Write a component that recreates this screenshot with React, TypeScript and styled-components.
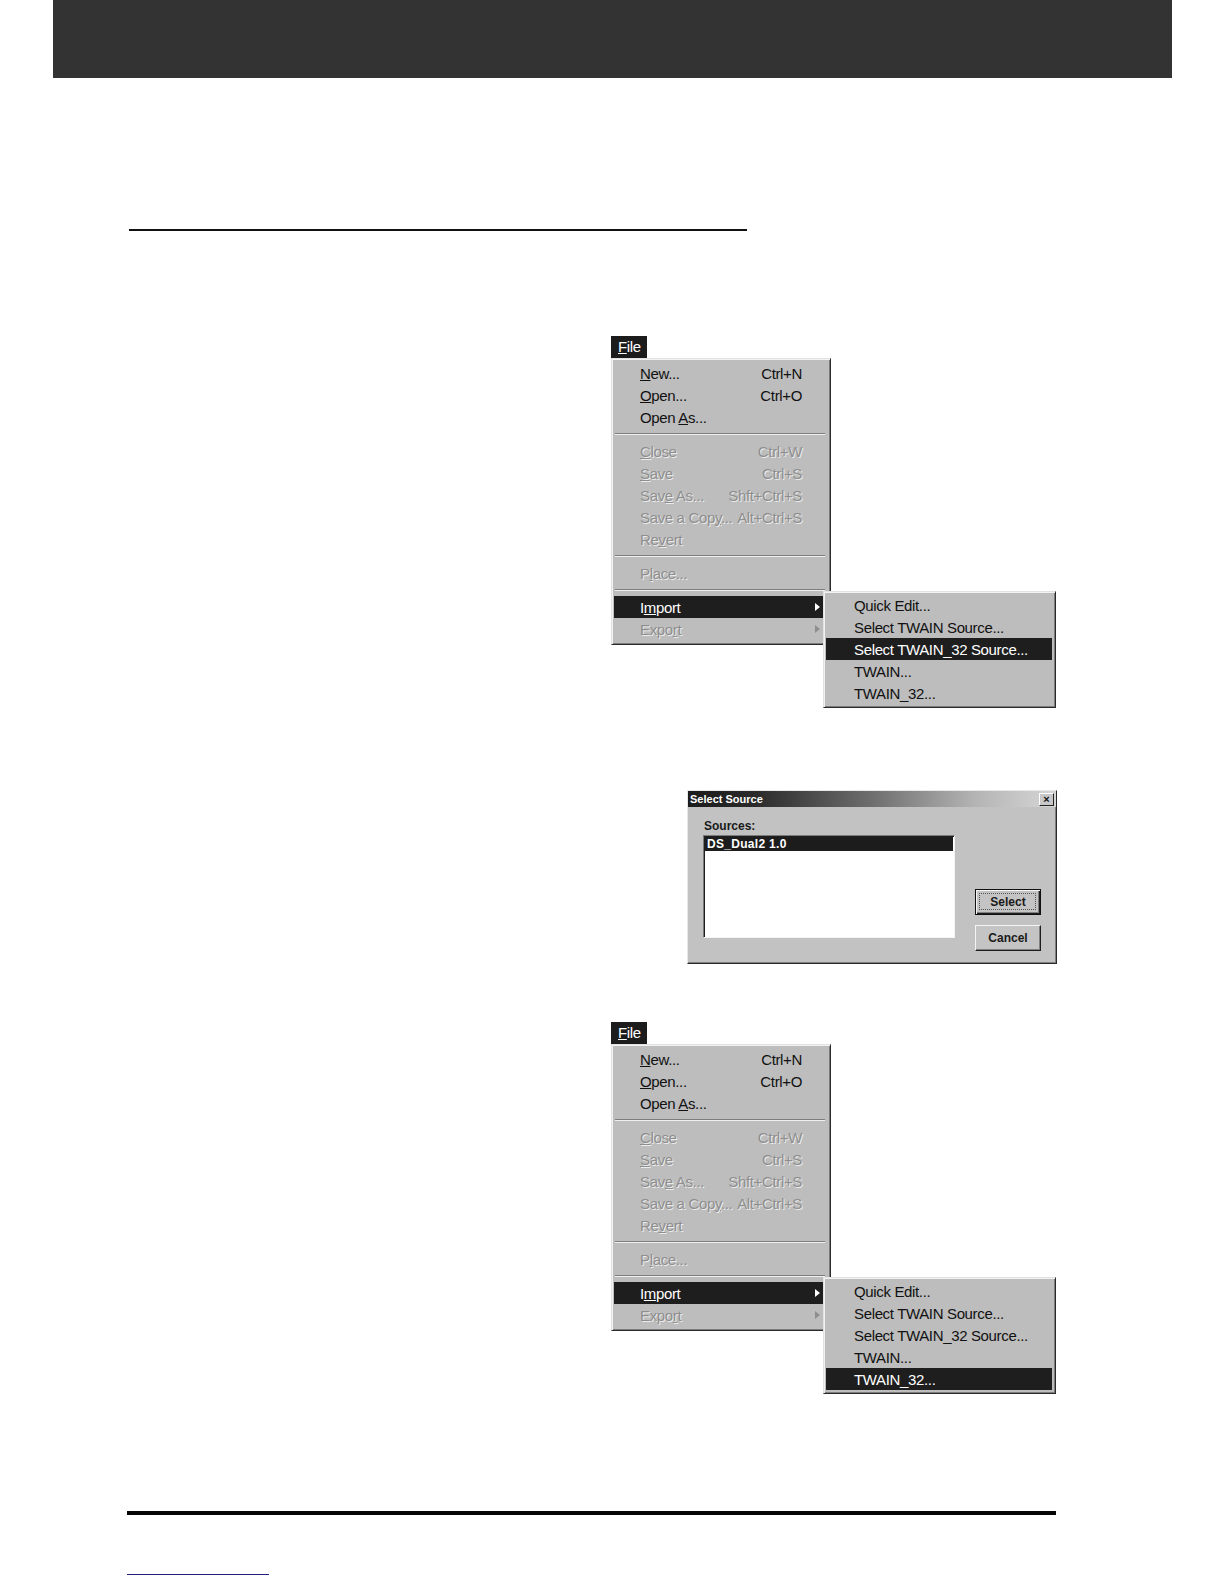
import React from "react";
import styled, { createGlobalStyle } from "styled-components";

const Global = createGlobalStyle`
  html, body { margin: 0; padding: 0; background: #ffffff; overflow: hidden; }
  body { font-family: "Liberation Sans", Arial, sans-serif; }
`;

const Page = styled.div`
  width: 1224px;
  height: 1584px;
  overflow: hidden;
  background: #fff;
  display: flex;
  flex-direction: column;
`;

const HeaderBar = styled.div`
  flex: none;
  margin: 0 52px 0 53px;
  height: 78px;
  background: #333333;
`;

const TitleRule = styled.div`
  flex: none;
  margin: 151px 0 0 129px;
  width: 618px;
  height: 2px;
  background: #111;
`;

const Figure = styled.div<{ $top: number }>`
  flex: none;
  position: relative;
  margin: ${(p) => p.$top}px 0 0 611px;
  width: 220px;
`;

const FileTab = styled.div`
  width: 36px;
  height: 22px;
  box-sizing: border-box;
  padding-left: 7px;
  background: #1c1c1c;
  color: #fff;
  font-size: 15px;
  letter-spacing: -0.35px;
  line-height: 22px;
`;

const MenuBox = styled.div`
  box-sizing: border-box;
  width: 220px;
  padding: 3px 4px 4px 2px;
  background: #bdbdbd;
  border: 1px solid;
  border-color: #e2e2e2 #2b2b2b #2b2b2b #e2e2e2;
  box-shadow: inset 1px 1px 0 #f2f2f2, inset -1px -1px 0 #7c7c7c;
  display: flex;
  flex-direction: column;
`;

const SubMenu = styled(MenuBox)`
  position: absolute;
  left: 212px;
  top: 255px;
  width: 233px;
  padding: 2px 3px 3px 2px;
`;

const Row = styled.div<{ $active?: boolean; $disabled?: boolean; $indent: number }>`
  height: 22px;
  display: flex;
  align-items: center;
  padding: 0 24px 0 ${(p) => p.$indent}px;
  font-size: 15px;
  letter-spacing: -0.35px;
  background: ${(p) => (p.$active ? "#1e1e1e" : "transparent")};
  color: ${(p) => (p.$active ? "#ffffff" : p.$disabled ? "#8e8e8e" : "#111111")};
  text-shadow: ${(p) => (p.$disabled ? "1px 1px 0 #ececec" : "none")};
  white-space: nowrap;
  position: relative;
`;

const Label = styled.span`
  flex: 1;
`;

const Shortcut = styled.span`
  text-align: right;
`;

const Arrow = styled.span<{ $color: string }>`
  position: absolute;
  right: 6px;
  top: 7px;
  width: 0;
  height: 0;
  border-top: 4px solid transparent;
  border-bottom: 4px solid transparent;
  border-left: 5px solid ${(p) => p.$color};
`;

const Separator = styled.div`
  height: 12px;
  display: flex;
  align-items: center;
  padding: 0 1px;
  &::after {
    content: "";
    display: block;
    width: 100%;
    height: 1px;
    background: #7d7d7d;
    border-bottom: 1px solid #f0f0f0;
  }
`;

const Dialog = styled.div`
  flex: none;
  box-sizing: border-box;
  margin: 145px 0 0 687px;
  width: 370px;
  height: 174px;
  background: #c2c2c2;
  border: 1px solid;
  border-color: #e8e8e8 #2a2a2a #2a2a2a #e8e8e8;
  box-shadow: inset -1px -1px 0 #808080;
  display: flex;
  flex-direction: column;
`;

const TitleBar = styled.div`
  height: 16px;
  display: flex;
  align-items: center;
  padding: 0 2px 0 2px;
  background: linear-gradient(90deg, #1c1c1c 0%, #2a2a2a 18%, #6e6e6e 50%, #b4b4b4 78%, #d6d6d6 100%);
  color: #fff;
  font-size: 11px;
  font-weight: bold;
`;

const TitleText = styled.span`
  flex: 1;
`;

const CloseBtn = styled.div`
  box-sizing: border-box;
  width: 15px;
  height: 13px;
  background: #c8c8c8;
  border: 1px solid;
  border-color: #fff #222 #222 #fff;
  color: #111;
  font-size: 11px;
  font-weight: bold;
  line-height: 10px;
  text-align: center;
`;

const DialogBody = styled.div`
  flex: 1;
  display: flex;
  padding: 12px 15px 0 15px;
`;

const SourcesCol = styled.div`
  display: flex;
  flex-direction: column;
`;

const FieldLabel = styled.div`
  font-size: 12px;
  font-weight: bold;
  color: #1a1a1a;
  line-height: 14px;
  margin-left: 1px;
  margin-bottom: 2px;
`;

const ListBox = styled.div`
  box-sizing: border-box;
  width: 252px;
  height: 103px;
  background: #fff;
  border: 1px solid;
  border-color: #7a7a7a #f4f4f4 #f4f4f4 #7a7a7a;
  box-shadow: inset 1px 1px 0 #1e1e1e;
  padding: 1px 1px 0 1px;
`;

const ListItem = styled.div<{ $selected?: boolean }>`
  height: 14px;
  padding-left: 2px;
  background: ${(p) => (p.$selected ? "#1c1c1c" : "transparent")};
  color: ${(p) => (p.$selected ? "#fff" : "#111")};
  font-size: 12px;
  font-weight: bold;
  letter-spacing: 0.3px;
  line-height: 14px;
`;

const ButtonCol = styled.div`
  margin-left: auto;
  padding-top: 70px;
  display: flex;
  flex-direction: column;
  gap: 10px;
`;

const Button = styled.div<{ $default?: boolean }>`
  box-sizing: border-box;
  width: 66px;
  height: 26px;
  display: flex;
  align-items: center;
  justify-content: center;
  background: #c4c4c4;
  font-size: 12px;
  font-weight: bold;
  color: #1a1a1a;
  border: 1px solid;
  border-color: ${(p) => (p.$default ? "#111" : "#f4f4f4 #1e1e1e #1e1e1e #f4f4f4")};
  box-shadow: ${(p) =>
    p.$default
      ? "inset 1px 1px 0 #f4f4f4, inset -1px -1px 0 #1e1e1e, inset -2px -2px 0 #808080"
      : "inset -1px -1px 0 #808080"};
  position: relative;
`;

const FocusRing = styled.span`
  position: absolute;
  inset: 3px 4px 4px 3px;
  border: 1px dotted #555;
`;

const BottomRule = styled.div`
  flex: none;
  margin: 180px 0 0 127px;
  width: 929px;
  height: 4px;
  background: #050505;
`;

const LinkLine = styled.div`
  flex: none;
  margin: 59px 0 0 127px;
  width: 142px;
  height: 1px;
  background: #22227a;
`;

type Item =
  | "sep"
  | { label: string; shortcut?: string; disabled?: boolean; arrow?: boolean; key: string };

const mainItems: Item[] = [
  { key: "new", label: "&New...", shortcut: "Ctrl+N" },
  { key: "open", label: "&Open...", shortcut: "Ctrl+O" },
  { key: "openas", label: "Open &As..." },
  "sep",
  { key: "close", label: "&Close", shortcut: "Ctrl+W", disabled: true },
  { key: "save", label: "&Save", shortcut: "Ctrl+S", disabled: true },
  { key: "saveas", label: "Sav&e As...", shortcut: "Shft+Ctrl+S", disabled: true },
  { key: "copy", label: "Save a Cop&y...", shortcut: "Alt+Ctrl+S", disabled: true },
  { key: "revert", label: "Re&vert", disabled: true },
  "sep",
  { key: "place", label: "P&lace...", disabled: true },
  "sep",
  { key: "import", label: "I&mport", arrow: true },
  { key: "export", label: "Expo&rt", arrow: true, disabled: true },
];

const subItems = [
  "Quick Edit...",
  "Select TWAIN Source...",
  "Select TWAIN_32 Source...",
  "TWAIN...",
  "TWAIN_32...",
];

function Accel({ text }: { text: string }) {
  const i = text.indexOf("&");
  if (i < 0) return <>{text}</>;
  return (
    <>
      {text.slice(0, i)}
      <u>{text.charAt(i + 1)}</u>
      {text.slice(i + 2)}
    </>
  );
}

function MenuFigure({ top, activeSub }: { top: number; activeSub: number }) {
  return (
    <Figure $top={top}>
      <FileTab>
        <Accel text="&File" />
      </FileTab>
      <MenuBox>
        {mainItems.map((it, idx) =>
          it === "sep" ? (
            <Separator key={"s" + idx} />
          ) : (
            <Row
              key={it.key}
              $indent={26}
              $active={it.key === "import"}
              $disabled={it.disabled}
            >
              <Label>
                <Accel text={it.label} />
              </Label>
              {it.shortcut && <Shortcut>{it.shortcut}</Shortcut>}
              {it.arrow && (
                <Arrow $color={it.key === "import" ? "#ffffff" : "#8e8e8e"} />
              )}
            </Row>
          )
        )}
      </MenuBox>
      <SubMenu>
        {subItems.map((s, i) => (
          <Row key={s} $indent={28} $active={i === activeSub}>
            <Label>{s}</Label>
          </Row>
        ))}
      </SubMenu>
    </Figure>
  );
}

function SelectSourceDialog() {
  return (
    <Dialog>
      <TitleBar>
        <TitleText>Select Source</TitleText>
        <CloseBtn>×</CloseBtn>
      </TitleBar>
      <DialogBody>
        <SourcesCol>
          <FieldLabel>Sources:</FieldLabel>
          <ListBox>
            <ListItem $selected>DS_Dual2 1.0</ListItem>
          </ListBox>
        </SourcesCol>
        <ButtonCol>
          <Button $default>
            <FocusRing />
            Select
          </Button>
          <Button>Cancel</Button>
        </ButtonCol>
      </DialogBody>
    </Dialog>
  );
}

export default function App() {
  return (
    <>
      <Global />
      <Page>
        <HeaderBar />
        <TitleRule />
        <MenuFigure top={105} activeSub={2} />
        <SelectSourceDialog />
        <MenuFigure top={58} activeSub={4} />
        <BottomRule />
        <LinkLine />
      </Page>
    </>
  );
}
